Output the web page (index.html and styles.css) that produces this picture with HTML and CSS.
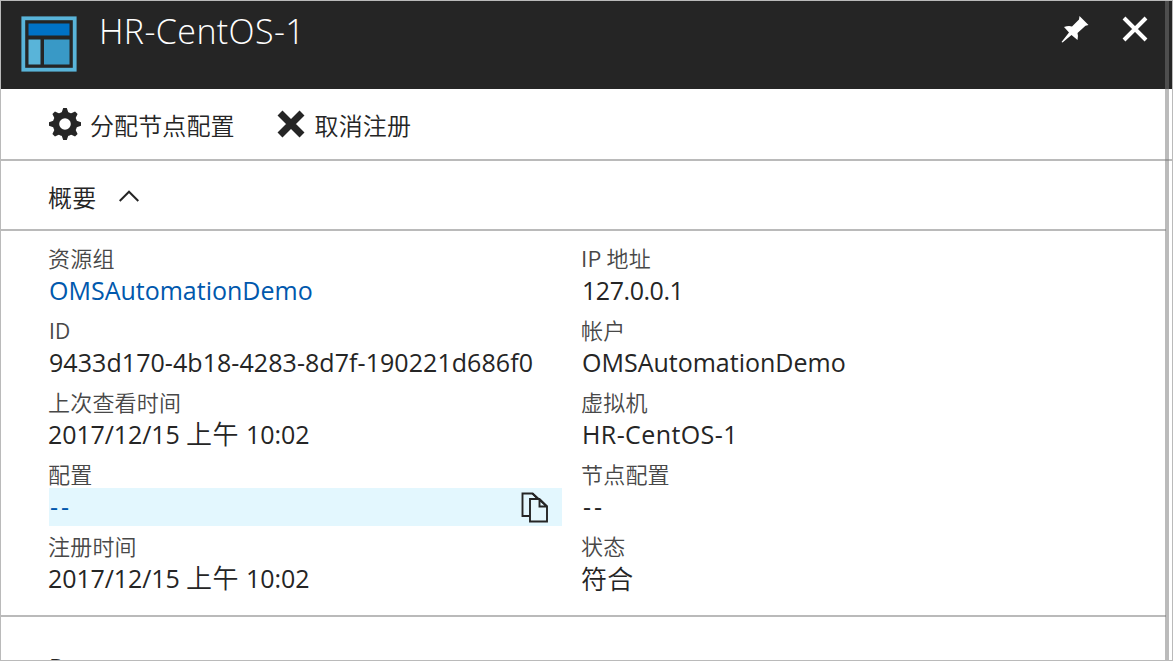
FILE: index.html
```
<!DOCTYPE html>
<html lang="zh-CN">
<head>
<meta charset="utf-8">
<title>HR-CentOS-1</title>
<link rel="stylesheet" href="styles.css">
</head>
<body>
<main class="blade">
  <header class="header">
    <svg class="logo" width="56" height="56" viewBox="0 0 56 56">
      <rect x="2.300" y="2.300" width="51.400" height="51.400" fill="none" stroke="#59b4d9" stroke-width="3.800"/>
      <rect x="7.500" y="7.500" width="41" height="12" fill="#0072c6"/>
      <rect x="7.500" y="23.500" width="12" height="25" fill="#59b4d9"/>
      <rect x="23" y="23.500" width="25.500" height="25" fill="#3999c6"/>
    </svg>
    <h1 class="title"><span>HR-CentOS-1</span></h1>
    <svg class="pin" width="28" height="28" viewBox="0 0 28 28" fill="#fff">
      <path d="M18.500 0 L27.500 9 L24.500 9.700 L16.500 17 Q17.500 20 16.500 24 L10.500 19 L1.500 26.500 L0.500 26 L8 16.500 L3 11 Q7.500 9.500 11 10.500 L18 3.500 Z"/>
    </svg>
    <svg class="close" width="26" height="26" viewBox="0 0 26 26" stroke="#fff" stroke-width="4">
      <path d="M2 2 L24 24 M24 2 L2 24"/>
    </svg>
  </header>
  <nav class="toolbar">
    <svg class="gear" width="32" height="32" viewBox="-16 -16 32 32">
      <g fill="#252525">
        <g id="tooth"><path d="M-3.500-11 L-1.800-16 H1.800 L3.500-11 Z M-3.500 11 L-1.800 16 H1.800 L3.500 11 Z"/></g>
        <use href="#tooth" transform="rotate(45)"/>
        <use href="#tooth" transform="rotate(90)"/>
        <use href="#tooth" transform="rotate(135)"/>
      </g>
      <circle r="9" fill="none" stroke="#252525" stroke-width="6.400"/>
    </svg>
    <span class="assign">分配节点配置</span>
    <svg class="remove" width="28" height="28" viewBox="0 0 28 28" stroke="#252525" stroke-width="7">
      <path d="M3 3 L25 25 M25 3 L3 25"/>
    </svg>
    <span>取消注册</span>
  </nav>
  <div class="essentials-bar">
    <span>概要</span>
    <svg class="chevron" width="20" height="12" viewBox="0 0 20 12" fill="none" stroke="#252525" stroke-width="2"><path d="M0.700 11 L10 1.700 L19.300 11"/></svg>
  </div>
  <section class="essentials">
    <dl class="column">
      <dt>资源组</dt><dd class="link demo"><span>OMSAutomationDemo</span></dd>
      <dt class="latin">ID</dt><dd class="guid"><span>9433d170-4b18-4283-8d7f-190221d686f0</span></dd>
      <dt>上次查看时间</dt><dd class="date"><span>2017/12/15 <span class="han">上午</span> 10:02</span></dd>
      <dt>配置</dt>
      <dd class="link selected"><span class="dashes">--</span>
        <svg class="copy" width="28" height="31" viewBox="0 0 28 31" fill="none" stroke="#252525" stroke-width="1.900"><path d="M8.500 24 H1.500 V1.500 H11.500 L17 7"/><path d="M9 7 H18.500 L26 14.500 V29.500 H9 Z" fill="#e5f7fd"/><path d="M18.500 7 V14.500 H26 M11.500 1.500 L26 14.500"/></svg>
      </dd>
      <dt>注册时间</dt><dd class="date"><span>2017/12/15 <span class="han">上午</span> 10:02</span></dd>
    </dl>
    <dl class="column">
      <dt>IP 地址</dt><dd class="ip"><span>127.0.0.1</span></dd>
      <dt>帐户</dt><dd class="demo"><span>OMSAutomationDemo</span></dd>
      <dt>虚拟机</dt><dd class="vm"><span>HR-CentOS-1</span></dd>
      <dt>节点配置</dt><dd><span class="dashes">--</span></dd>
      <dt>状态</dt><dd><span class="han">符合</span></dd>
    </dl>
  </section>
  <section class="next"><span>R</span></section>
  <div class="scrollbar"></div>
</main>
</body>
</html>
```
FILE: styles.css
```
* { box-sizing: border-box; }
body { margin: 0; background: #fff; color: #252525; font-family: "Open Sans", "Noto Sans CJK SC", sans-serif; }
.blade { position: relative; width: 1173px; height: 661px; overflow: hidden; border: 1px solid #bababa; }
.header { display: flex; align-items: flex-start; height: 88px; padding: 15px 24px 0 20px; background: #252525; }
.title { flex: 1; margin: -8px 0 0 22px; color: #fff; font: 300 34px/46px "Open Sans", sans-serif; letter-spacing: 0.4px; }
.pin { margin-right: 33px; }
.toolbar { display: flex; align-items: center; height: 72px; padding-left: 48px; border-bottom: 2px solid #bababa; font-family: "Noto Sans CJK SC", sans-serif; font-size: 24px; font-weight: 350; letter-spacing: 0.1px; }
.assign { margin: 0 42px 0 9px; }
.remove { margin-right: 10px; }
.essentials-bar { display: flex; align-items: center; height: 70px; margin-right: 6px; padding: 2px 0 0 47px; border-bottom: 2px solid #bababa; font: 350 24px "Noto Sans CJK SC", sans-serif; letter-spacing: 0.3px; }
.chevron { margin: -1px 0 0 22px; }
.essentials { display: grid; grid-template-columns: 513px 513px; gap: 20px; height: 386px; margin-right: 6px; padding: 13px 0 0 48px; border-bottom: 2px solid #bababa; }
.column { margin: 0; }
dt { height: 28px; margin-left: -1px; color: #484848; font: 350 22px/26px "Noto Sans CJK SC", sans-serif; letter-spacing: 0.2px; }
.latin { margin-left: 0; padding-top: 2px; font-family: "Open Sans", sans-serif; font-weight: 400; font-size: 21px; }
dd { display: flex; align-items: center; height: 38px; margin: 0 0 6px; padding-bottom: 2px; font-size: 25px; line-height: 34px; white-space: nowrap; }
.han { font-family: "Noto Sans CJK SC", sans-serif; font-size: 26px; font-weight: 350; line-height: 1; margin-left: -1px; letter-spacing: 0.3px; }
.link { color: #0058ad; }
.guid { letter-spacing: 0.06px; }
.date { margin-left: -1px; letter-spacing: -0.1px; }
.date .han { margin: 0 1px 0 0; }
.ip { letter-spacing: -0.45px; }
.vm { letter-spacing: 0.4px; }
.dashes { letter-spacing: 3px; margin-left: 1px; }
.selected { justify-content: space-between; padding-right: 13px; background: #e3f7fe; }
.copy { position: relative; top: 1px; }
.next { padding: 34px 0 0 48px; font-size: 24px; line-height: 32px; }
.scrollbar { position: absolute; top: 0; right: 3px; width: 4px; height: 660px; background: rgba(120, 120, 120, .5); }
```
